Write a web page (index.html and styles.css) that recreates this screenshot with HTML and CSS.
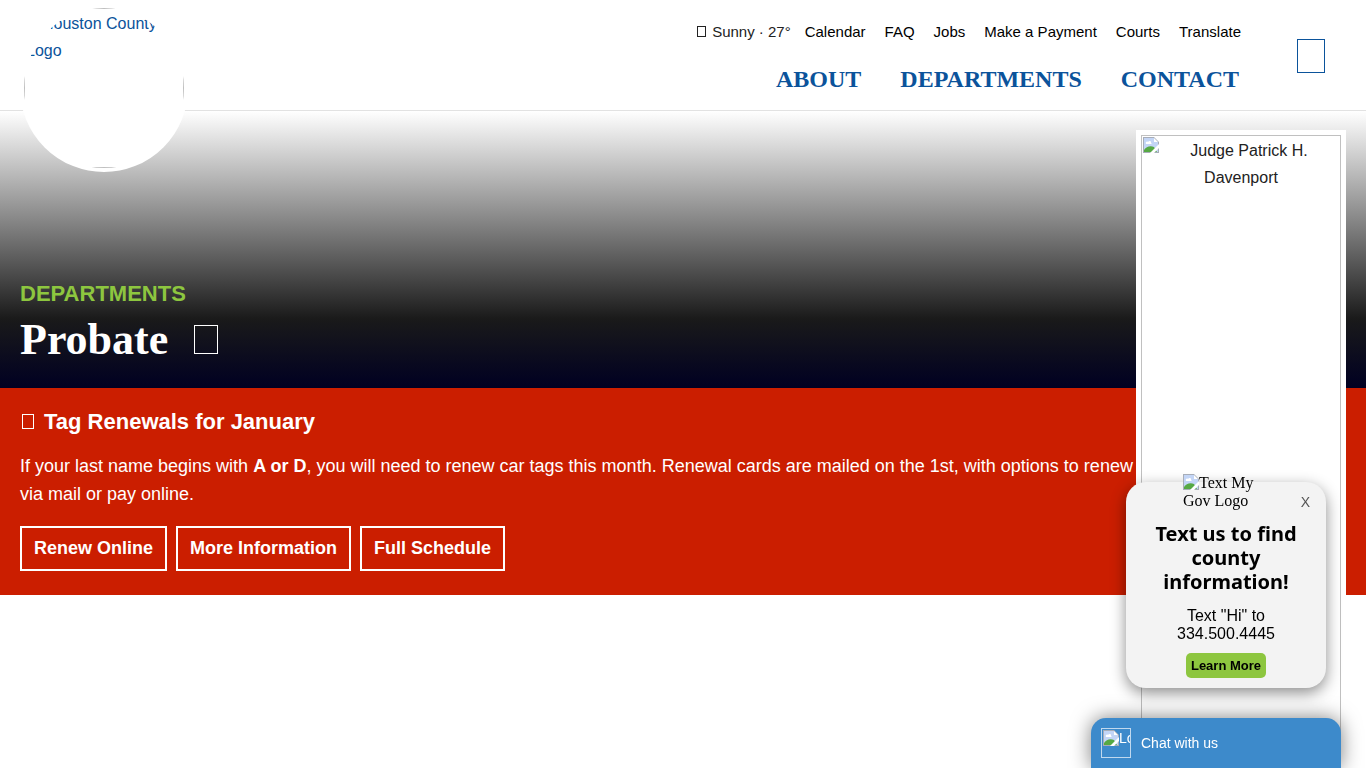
FILE: index.html
```html
<!DOCTYPE html>
<html lang="en">
<head>
    <meta charset="UTF-8">
    <meta name="viewport" content="width=device-width, initial-scale=1.0">
    <title>Probate - Houston County</title>
    <link rel="stylesheet" href="styles.css">
</head>
<body>
    <svg class="defs" aria-hidden="true">
        <symbol id="broken" viewBox="0 0 16 16">
            <path d="M0 0h11l5 5v11H0z" fill="#a7adb8"/>
            <path d="M1 1h10v4h4v10H1z" fill="#c3d5f6"/>
            <path d="M11 1v4h4z" fill="#fff"/>
            <path d="M3 7c-1-2 1-3 2-2 1-2 4-1 3 1 1 0 1 1 0 1z" fill="#fff"/>
            <path d="M1 15v-2c2-3 6-5 10-3l3 5z" fill="#56a944"/>
            <path d="M7 16L16 7v4l-5 5z" fill="#fff"/>
        </symbol>
    </svg>

    <header class="header">
        <a class="logo" href="#">
            <span class="logo-img"><svg class="broken"><use href="#broken"/></svg>Houston County Logo</span>
        </a>
        <div class="navs">
            <nav class="top-nav">
                <span class="weather"><i class="glyph glyph-sm"></i>Sunny · 27°</span>
                <a href="#">Calendar</a>
                <a href="#">FAQ</a>
                <a href="#">Jobs</a>
                <a href="#">Make a Payment</a>
                <a href="#">Courts</a>
                <a href="#">Translate</a>
            </nav>
            <nav class="main-nav">
                <a href="#">About</a>
                <a href="#">Departments</a>
                <a href="#">Contact</a>
            </nav>
        </div>
        <button class="search" type="button" aria-label="Search"><i class="glyph glyph-lg"></i></button>
    </header>

    <main>
        <section class="hero">
            <a class="section-link" href="#">Departments</a>
            <h1>Probate <i class="glyph glyph-title"></i></h1>
        </section>
        <section class="notice">
            <h2><i class="glyph glyph-md"></i>Tag Renewals for January</h2>
            <p>If your last name begins with <strong>A or D</strong>, you will need to renew car tags this month. Renewal cards are mailed on the 1st, with options to renew via mail or pay online.</p>
            <div class="buttons">
                <a href="#">Renew Online</a>
                <a href="#">More Information</a>
                <a href="#">Full Schedule</a>
            </div>
        </section>
    </main>

    <aside class="judge">
        <div class="judge-img">
            <svg class="broken"><use href="#broken"/></svg>
            Judge Patrick H. Davenport
        </div>
    </aside>

    <div class="text-popup">
        <div class="popup-logo"><svg class="broken"><use href="#broken"/></svg>Text My Gov Logo</div>
        <button class="close" type="button">X</button>
        <h3>Text us to find county information!</h3>
        <p>Text "Hi" to 334.500.4445</p>
        <a class="learn" href="#">Learn More</a>
    </div>

    <button class="chat" type="button">
        <span class="chat-img"><svg class="broken"><use href="#broken"/></svg>Logo</span>
        Chat with us
    </button>
</body>
</html>
```

FILE: styles.css
```css
* {
    box-sizing: border-box;
}
body {
    position: relative;
    margin: 0;
    min-height: 100vh;
    background: #fff;
    color: #222;
    font-family: "Liberation Sans", Arial, sans-serif;
    font-size: 16px;
    line-height: 27px;
}
a {
    color: inherit;
    text-decoration: none;
}
h1, h2, h3, p {
    margin: 0;
}
button {
    padding: 0;
    border: 0;
    background: none;
    font-family: inherit;
    cursor: pointer;
}
.defs {
    position: absolute;
    width: 0;
    height: 0;
}
.broken {
    width: 16px;
    height: 16px;
    flex: none;
}

/* empty icon boxes */
.glyph {
    display: inline-block;
    border: 1px solid currentColor;
}
.glyph-sm {
    width: 9px;
    height: 11px;
    margin-right: 6px;
}
.glyph-md {
    width: 12px;
    height: 15px;
    margin: 0 10px 0 2px;
}
.glyph-lg {
    display: block;
    width: 28px;
    height: 34px;
}
.glyph-title {
    width: 24px;
    height: 29px;
    margin-left: 15px;
}

/* header */
.header {
    position: relative;
    display: flex;
    justify-content: flex-end;
    height: 111px;
    padding-right: 41px;
    border-bottom: 1px solid #e2e2e2;
    background: #fff;
}
.logo {
    position: absolute;
    top: 4px;
    left: 20px;
    width: 168px;
    height: 168px;
    border: 4px solid #fff;
    border-radius: 50%;
    background: #fff;
    color: #0b539b;
    overflow: hidden;
}
.logo-img {
    display: block;
    height: 160px;
    padding: 1px;
    border: 1px solid #c0c0c0;
}
.navs {
    display: flex;
    flex-direction: column;
    align-items: flex-end;
    padding-top: 18px;
}
.top-nav {
    display: flex;
    gap: 19px;
    color: #000;
    font-size: 15px;
}
.weather {
    margin-right: -5px;
    color: #222;
}
.main-nav {
    display: flex;
    gap: 39px;
    padding: 21px 2px 0 0;
    color: #0b539b;
    font-family: "Liberation Serif", "Times New Roman", serif;
    font-size: 24px;
    font-weight: bold;
    text-transform: uppercase;
}
.search {
    align-self: flex-start;
    margin: 39px 0 0 56px;
    color: #0b539b;
}

/* hero */
.hero {
    height: 277px;
    padding: 169px 20px 0;
    background: linear-gradient(#fff, #1a1a1a 75%, #000022);
}
.section-link {
    display: block;
    color: #8dc63f;
    font-size: 22px;
    font-weight: bold;
    text-transform: uppercase;
}
h1 {
    padding-top: 8px;
    color: #fff;
    font-family: "Liberation Serif", "Times New Roman", serif;
    font-size: 44px;
    line-height: 50px;
}

/* red notice */
.notice {
    padding: 20px 230px 24px 20px;
    background: #cb1e00;
    color: #fff;
    font-size: 18px;
    line-height: 28px;
}
.notice h2 {
    font-size: 22px;
}
.notice p {
    padding: 16px 0 18px;
}
.buttons {
    display: flex;
    gap: 9px;
}
.buttons a {
    padding: 6px 12px 7px;
    border: 2px solid #fff;
    font-weight: bold;
}

/* judge photo */
.judge {
    position: absolute;
    top: 130px;
    right: 20px;
    bottom: 0;
    width: 210px;
    padding: 5px 5px 0;
    background: #fff;
}
.judge-img {
    height: 100%;
    padding: 1px 1px 0;
    border: 1px solid #c0c0c0;
    border-bottom: 0;
    text-align: center;
}
.judge-img .broken {
    float: left;
}

/* text my gov popup */
.text-popup {
    position: fixed;
    right: 40px;
    bottom: 80px;
    display: flex;
    flex-direction: column;
    align-items: center;
    width: 200px;
    height: 206px;
    border-radius: 20px;
    background: #f3f3f3;
    box-shadow: 0 5px 15px rgba(0, 0, 0, .45);
    color: #000;
    line-height: 18px;
    text-align: center;
}
.popup-logo {
    width: 86px;
    margin-top: -8px;
    font-family: "Liberation Serif", "Times New Roman", serif;
    text-align: left;
}
.popup-logo .broken {
    vertical-align: top;
}
.close {
    position: absolute;
    top: 11px;
    right: 16px;
    color: #555;
    font-size: 14px;
    line-height: 18px;
}
.text-popup h3 {
    width: 160px;
    margin-top: 12px;
    font-family: "Lucida Sans Unicode", "Noto Sans", sans-serif;
    font-size: 20px;
    line-height: 24px;
}
.text-popup p {
    width: 120px;
    margin: 13px 0 10px;
}
.learn {
    padding: 4px 5px 3px;
    border-radius: 5px;
    background: #8dc63f;
    font-size: 13px;
    font-weight: bold;
}

/* chat tab */
.chat {
    position: fixed;
    right: 25px;
    bottom: 0;
    display: flex;
    align-items: center;
    gap: 10px;
    width: 250px;
    height: 50px;
    padding: 0 10px;
    border-radius: 15px 15px 0 0;
    background: #3d8acb;
    box-shadow: 0 0 20px rgba(0, 0, 0, .5);
    color: #fff;
    font-size: 14px;
}
.chat-img {
    display: flex;
    width: 30px;
    height: 30px;
    padding: 1px;
    border: 1px solid #c0d8ee;
    overflow: hidden;
}
```
